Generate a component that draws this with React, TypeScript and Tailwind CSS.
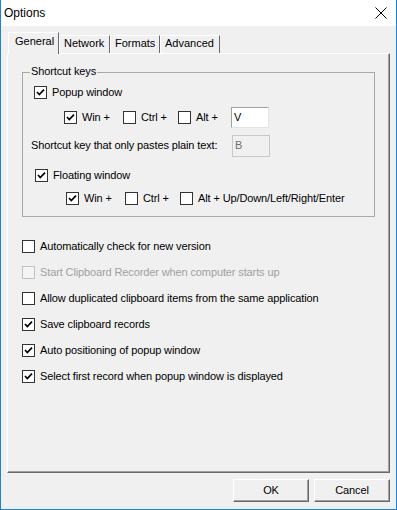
import React from "react";

const font = { fontFamily: '"Liberation Sans", Arial, sans-serif' };

function Check({ checked = false, disabled = false }: { checked?: boolean; disabled?: boolean }) {
  return (
    <span
      className={
        "flex h-[13px] w-[13px] shrink-0 items-center justify-center border " +
        (disabled ? "border-[#c2c2c2] bg-[#f4f4f4]" : "border-[#333333] bg-white")
      }
    >
      {checked && (
        <svg width="11" height="11" viewBox="0 0 11 11">
          <polyline points="2,5 4.3,7.6 9,2.6" fill="none" stroke="#000" strokeWidth="1.7" />
        </svg>
      )}
    </span>
  );
}

function CheckRow({
  label,
  checked,
  disabled,
  className = "",
}: {
  label: string;
  checked?: boolean;
  disabled?: boolean;
  className?: string;
}) {
  return (
    <div className={"flex h-[13px] items-center gap-[5px] " + className}>
      <Check checked={checked} disabled={disabled} />
      <span className={"whitespace-nowrap leading-none " + (disabled ? "text-[#a0a0a0]" : "text-black")}>{label}</span>
    </div>
  );
}

function Tab({ label, selected = false, width }: { label: string; selected?: boolean; width: string }) {
  return (
    <div
      className={
        "flex items-start border-l border-t border-r border-l-white border-t-white border-r-[#696969] bg-[#f0f0f0] " +
        width +
        (selected ? " relative z-10 -mb-px h-[22px] pl-[6px] pt-[3px]" : " h-[18px] pl-[4px] pt-[2px]")
      }
    >
      <span className="leading-none">{label}</span>
    </div>
  );
}

function Button({ label }: { label: string }) {
  return (
    <button
      type="button"
      className="flex h-[23px] w-[76px] items-center justify-center border border-l-white border-t-white border-r-[#696969] border-b-[#696969] bg-[#f0f0f0] shadow-[inset_-1px_-1px_0_#a0a0a0] text-black"
    >
      {label}
    </button>
  );
}

export default function App() {
  return (
    <div
      className="flex h-[510px] w-[397px] flex-col border-x border-b border-[#1883d7] bg-[#f0f0f0] text-[11px] tracking-[-0.12px] text-black"
      style={font}
    >
      <div className="flex h-[26px] items-center justify-between bg-white pl-[3px] pr-[9px]">
        <span className="text-[12px] tracking-normal">Options</span>
        <svg width="12" height="12" viewBox="0 0 12 12">
          <path d="M0.5 0.5 L11.5 11.5 M11.5 0.5 L0.5 11.5" stroke="#000" strokeWidth="1" fill="none" />
        </svg>
      </div>

      <div className="flex flex-1 flex-col px-[6px] pt-[7px]">
        <div className="flex h-[20px] items-end pl-px tracking-normal">
          <Tab label="General" selected width="w-[51px]" />
          <Tab label="Network" width="w-[51px]" />
          <Tab label="Formats" width="w-[50px]" />
          <Tab label="Advanced" width="w-[60px]" />
        </div>

        <div className="h-[420px] w-[383px] border border-l-white border-t-white border-r-[#696969] border-b-[#696969] shadow-[inset_-1px_-1px_0_#a0a0a0]">
          <div className="relative ml-[14px] mt-[18px] flex h-[145px] w-[353px] flex-col border border-[#a9a9a9]">
            <span className="absolute -top-[7px] left-[7px] bg-[#f0f0f0] px-[1px] leading-none">Shortcut keys</span>

            <CheckRow label="Popup window" checked className="mt-[13px] pl-[11px]" />

            <div className="mt-[8px] flex h-[21px] items-center pl-[41px]">
              <CheckRow label="Win +" checked className="w-[59px]" />
              <CheckRow label="Ctrl +" className="w-[55px]" />
              <CheckRow label="Alt +" className="w-[53px]" />
              <div className="flex h-[21px] w-[38px] items-center border border-[#a0a0a0] border-b-[#e3e3e3] border-r-[#e3e3e3] bg-white pl-[2px]">
                V
              </div>
            </div>

            <div className="mt-[7px] flex h-[21px] items-center pl-[8px]">
              <span className="w-[201px]">Shortcut key that only pastes plain text:</span>
              <div className="flex h-[22px] w-[38px] items-center border border-[#c8c8c8] bg-[#f0f0f0] pl-[2px] text-[#6d6d6d]">
                B
              </div>
            </div>

            <CheckRow label="Floating window" checked className="mt-[13px] pl-[12px]" />

            <div className="mt-[10px] flex h-[13px] items-center pl-[43px]">
              <CheckRow label="Win +" checked className="w-[59px]" />
              <CheckRow label="Ctrl +" className="w-[55px]" />
              <CheckRow label="Alt + Up/Down/Left/Right/Enter" />
            </div>
          </div>

          <div className="ml-[14px] mt-[23px] flex flex-col gap-[13px]">
            <CheckRow label="Automatically check for new version" />
            <CheckRow label="Start Clipboard Recorder when computer starts up" disabled />
            <CheckRow label="Allow duplicated clipboard items from the same application" />
            <CheckRow label="Save clipboard records" checked />
            <CheckRow label="Auto positioning of popup window" checked />
            <CheckRow label="Select first record when popup window is displayed" checked />
          </div>
        </div>

        <div className="mt-[6px] flex justify-end gap-[5px] pr-0">
          <Button label="OK" />
          <Button label="Cancel" />
        </div>
      </div>
    </div>
  );
}
